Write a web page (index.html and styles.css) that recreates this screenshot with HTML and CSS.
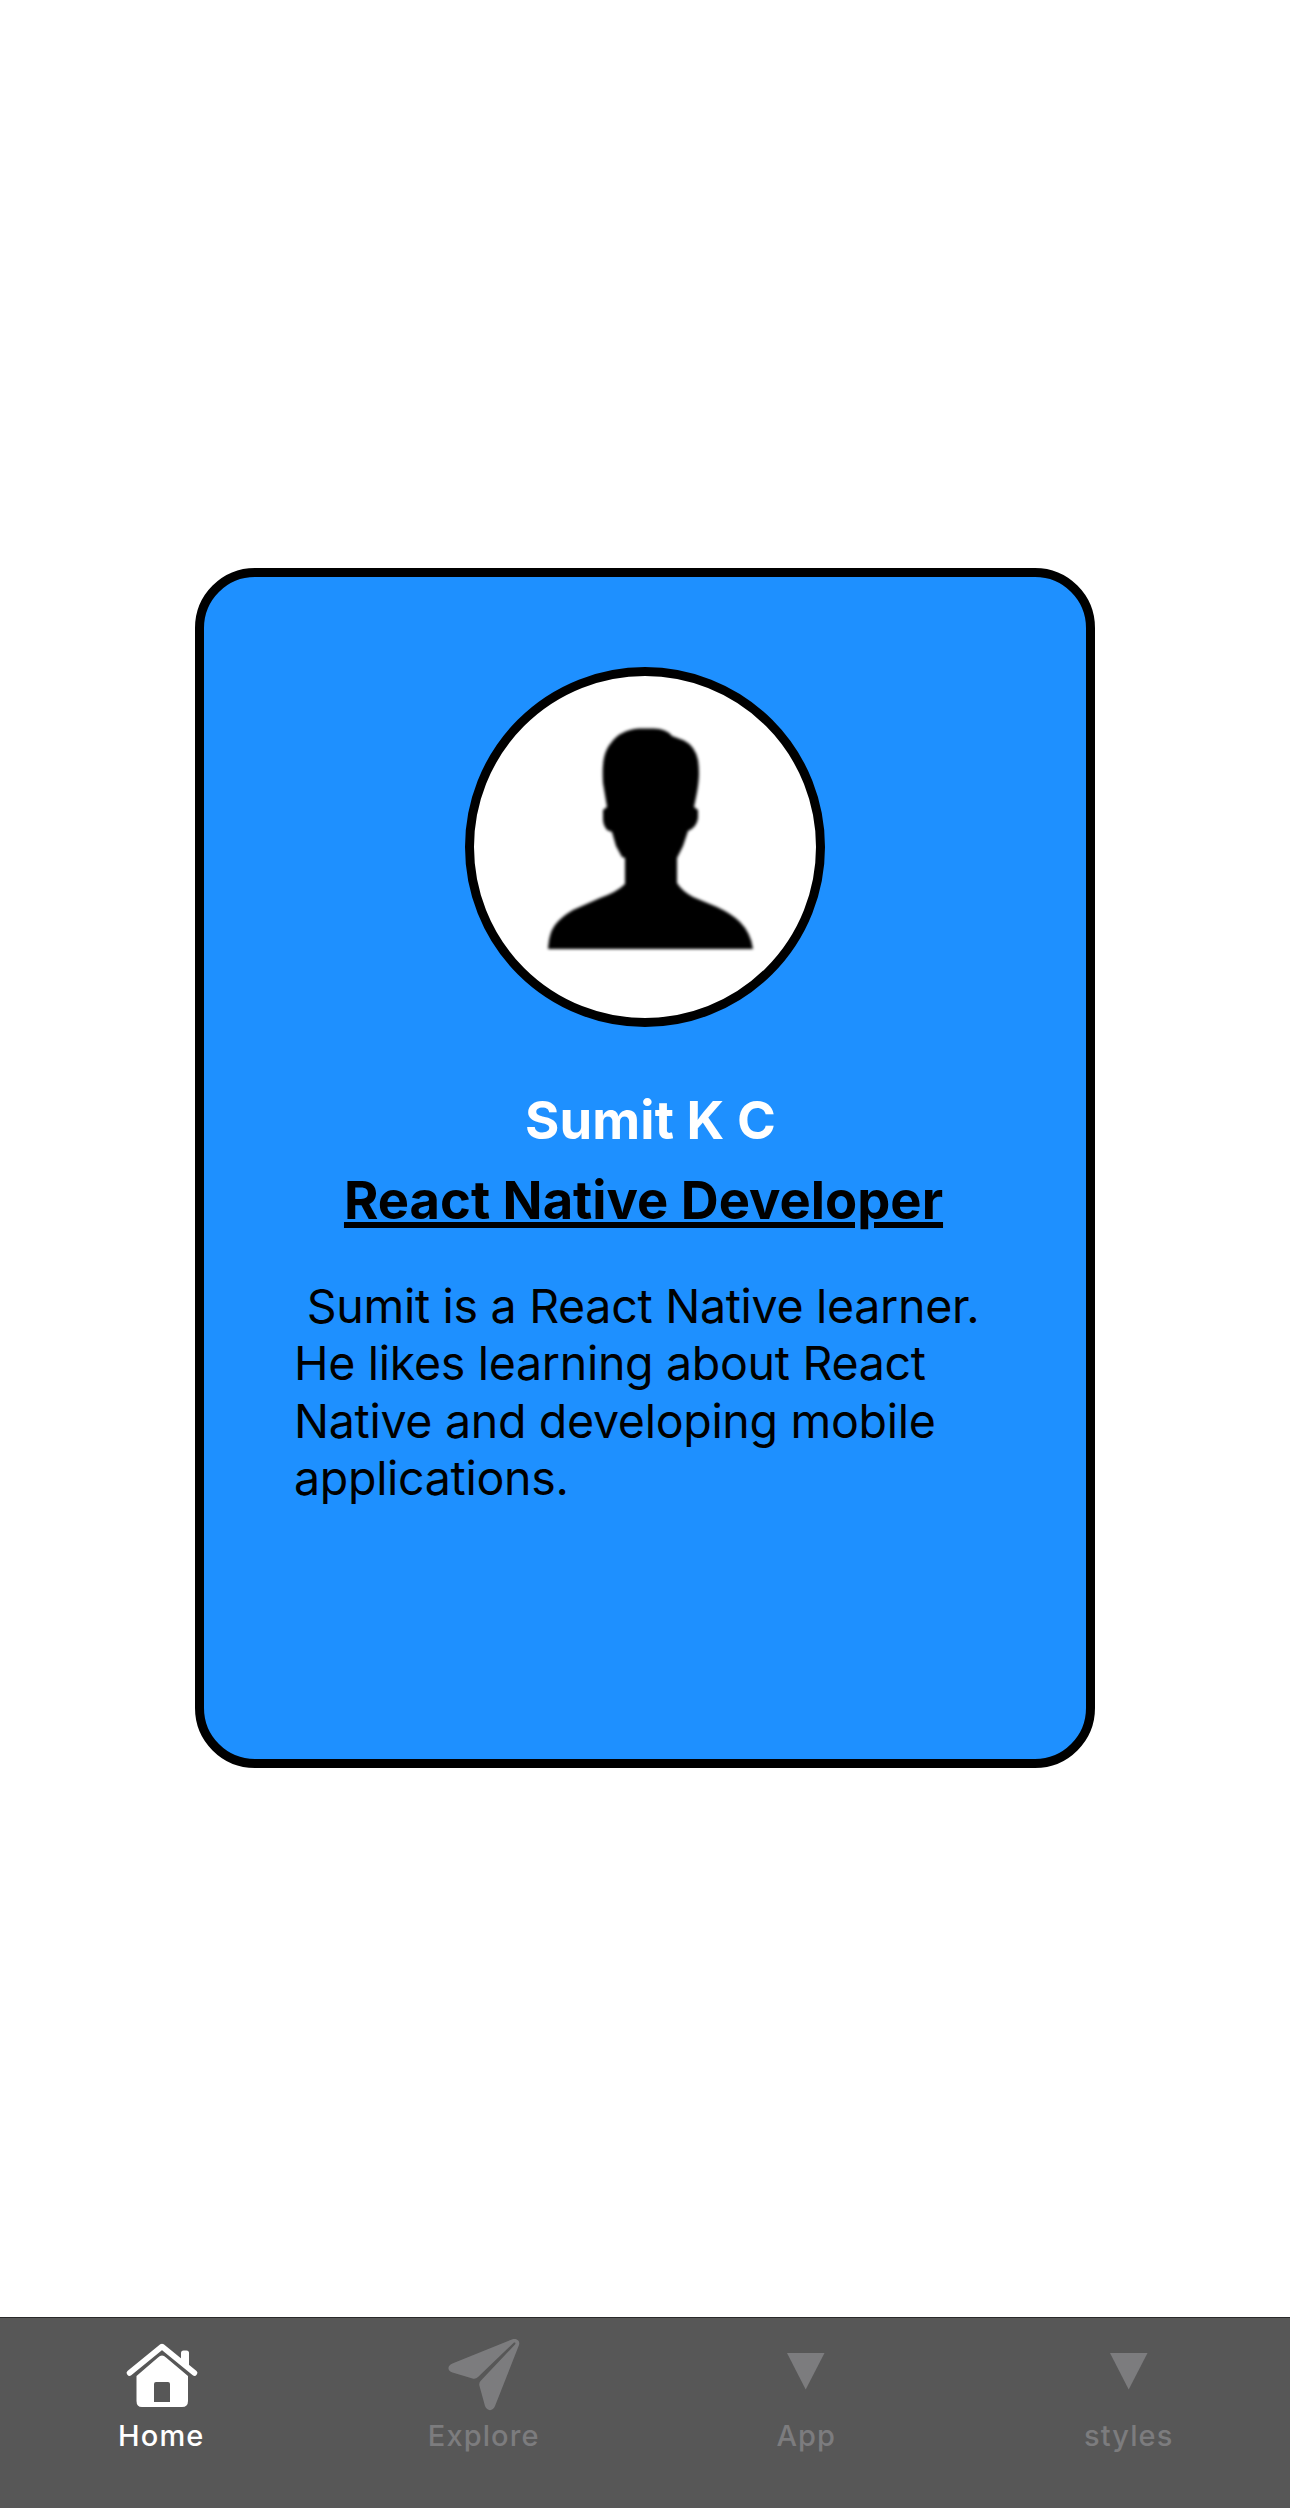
FILE: index.html
```html
<!DOCTYPE html>
<html lang="en">
<head>
<meta charset="utf-8">
<title>Profile</title>
<link rel="stylesheet" href="styles.css">
</head>
<body>
<main class="screen">
  <article class="card">
    <div class="avatar">
      <svg class="person" viewBox="0 0 342 342" aria-hidden="true">
        <path d="M74 273C75 263 76 256 81 249Q87 241 99 234L126 222Q143 216 151 208V182L148 181L142 170L138 156L133 154Q129 149 129 143V134L133 131L129 107C128 90 129 76 137 67Q146 54 165 52.500H178Q192 52 198 60L210 64.500Q221 70 224 84C226 98 225 109 220 131L224 134V142Q223 151 214 155L209 170L204 180L203 182V207Q208 215 219 221L243 231Q258 238 266 246Q277 257 279 273Z"/>
      </svg>
    </div>
    <h1 class="name">Sumit K C</h1>
    <h2 class="role">React Native Developer</h2>
    <p class="bio">&nbsp;Sumit is a React Native learner.<br>He likes learning about React<br>Native and developing mobile<br>applications.</p>
  </article>
</main>
<nav class="tabs">
  <a class="tab active">
    <svg class="icon" viewBox="0 0 84 84" aria-hidden="true">
      <path class="roof" d="M10.500 36L43 9.500L75.500 36"/>
      <path d="M62 24V16Q62 13.500 64.500 13.500H67.500Q70 13.500 70 16V31Z"/>
      <path fill-rule="evenodd" d="M17.500 39L39 20.500Q43 16.500 47 20.500L69 39V64Q69 70 63 70H23Q17.500 70 17.500 64ZM35 47V65H51V47Q51 45 49 45H37Q35 45 35 47Z"/>
    </svg>
    <span class="label">Home</span>
  </a>
  <a class="tab">
    <svg class="icon" viewBox="0 0 84 84" aria-hidden="true">
      <path d="M11 26.300L70.500 2.300C74.500 1 78.500 4 77 8L53 69C51 74.500 45 74.500 43 69L37.500 49Q36.500 46 39 43.500L73 7.500Q74.500 5 72 5.500L36 40Q33.500 42.500 30.500 41.500L10.500 35.500C5 34 5 28.500 11 26.300Z"/>
    </svg>
    <span class="label">Explore</span>
  </a>
  <a class="tab">
    <svg class="icon" viewBox="0 0 84 84" aria-hidden="true"><path d="M23 16H60.500L41.700 52.500Z"/></svg>
    <span class="label">App</span>
  </a>
  <a class="tab">
    <svg class="icon" viewBox="0 0 84 84" aria-hidden="true"><path d="M23 16H60.500L41.700 52.500Z"/></svg>
    <span class="label">styles</span>
  </a>
</nav>
</body>
</html>
```
FILE: styles.css
```css
* { box-sizing: border-box; }
body {
  margin: 0;
  height: 2508px;
  display: flex;
  flex-direction: column;
  background: #fff;
  font-family: Inter, "Liberation Sans", sans-serif;
}
.screen {
  flex: 1;
  display: flex;
  justify-content: center;
  align-items: flex-start;
  padding-top: 568px;
}
.card {
  width: 900px;
  height: 1200px;
  border: 9px solid #000;
  border-radius: 60px;
  background: #1e90ff;
  display: flex;
  flex-direction: column;
  align-items: center;
  padding: 90px 90px 0;
}
.avatar {
  width: 360px;
  height: 360px;
  flex: none;
  border: 9px solid #000;
  border-radius: 50%;
  background: #fff;
}
.person { display: block; width: 342px; height: 342px; filter: blur(1.7px); }
.name, .role { margin: 0; font-size: 52.5px; line-height: 64px; font-weight: 700; white-space: nowrap; }
.name { margin-top: 61px; padding-left: 11px; color: #fff; letter-spacing: 0.1px; }
.role {
  margin-top: 16px;
  padding-right: 3px;
  text-decoration: underline;
  text-decoration-thickness: 6px;
  text-underline-offset: 3px;
}
.bio {
  align-self: stretch;
  margin: 46px 0 0;
  font-size: 46.5px;
  line-height: 57.4px;
  letter-spacing: -0.3px;
  white-space: nowrap;
}
.tabs {
  height: 191px;
  display: grid;
  grid-template-columns: repeat(4, 1fr);
  border-top: 1px solid #29292a;
  background: #575757;
}
.tab {
  display: flex;
  flex-direction: column;
  align-items: center;
  padding-top: 19px;
  color: #7c7c7e;
}
.active { color: #fff; }
.icon { width: 84px; height: 84px; fill: currentColor; }
.roof { fill: none; stroke: currentColor; stroke-width: 5.5; stroke-linecap: round; stroke-linejoin: round; }
.label { margin-top: -2px; font-size: 29px; line-height: 34px; font-weight: 500; letter-spacing: 1.1px; }
```
